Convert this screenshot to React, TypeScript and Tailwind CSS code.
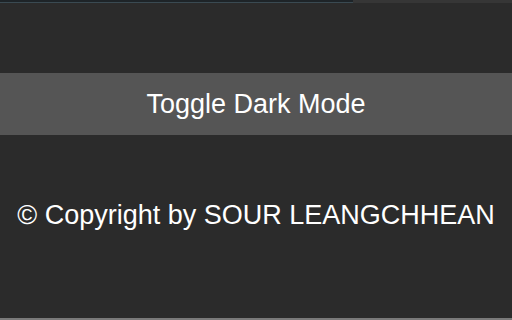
export default function App() {
  return (
    <div className="flex h-[320px] w-[512px] flex-col bg-[#2b2b2b] font-['Liberation_Sans',Arial,sans-serif] text-white">
      {/* top scroll strip */}
      <div className="flex h-[3px] w-full">
        <div className="w-[353px] border-b border-[#3a4a52] bg-[#1e2428]" />
        <div className="flex-1 bg-[#363636]" />
      </div>

      <div className="mt-[70px] flex h-[62px] w-full items-center justify-center bg-[#555555]">
        <button className="text-[27px] leading-none text-white">Toggle Dark Mode</button>
      </div>

      <div className="mt-[62px] flex justify-center">
        <p className="text-[27px] leading-[36px] whitespace-nowrap">© Copyright by SOUR LEANGCHHEAN</p>
      </div>

      <div className="flex-1" />
      <div className="h-[2px] w-full bg-[#7a7a7a]" />
    </div>
  );
}
